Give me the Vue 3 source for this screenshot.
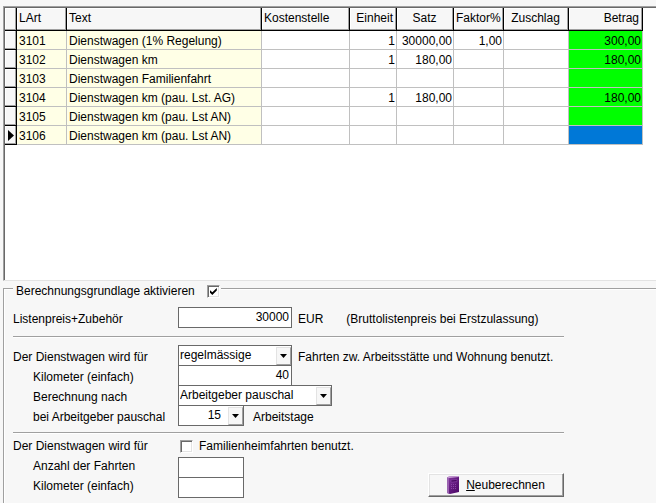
<script setup>
import { ref } from 'vue'

const columns = [
  { key: 'lart', label: 'LArt', align: 'left', tone: 'key' },
  { key: 'text', label: 'Text', align: 'left', tone: 'key' },
  { key: 'stelle', label: 'Kostenstelle', align: 'left' },
  { key: 'einheit', label: 'Einheit', align: 'right' },
  { key: 'satz', label: 'Satz', align: 'right', head: 'center' },
  { key: 'faktor', label: 'Faktor%', align: 'right' },
  { key: 'zuschlag', label: 'Zuschlag', align: 'right', head: 'center' },
  { key: 'betrag', label: 'Betrag', align: 'right', tone: 'sum' },
]

const rows = [
  { lart: '3101', text: 'Dienstwagen (1% Regelung)', einheit: '1', satz: '30000,00', faktor: '1,00', betrag: '300,00' },
  { lart: '3102', text: 'Dienstwagen km', einheit: '1', satz: '180,00', betrag: '180,00' },
  { lart: '3103', text: 'Dienstwagen Familienfahrt' },
  { lart: '3104', text: 'Dienstwagen km (pau. Lst. AG)', einheit: '1', satz: '180,00', betrag: '180,00' },
  { lart: '3105', text: 'Dienstwagen km (pau. Lst AN)' },
  { lart: '3106', text: 'Dienstwagen km (pau. Lst AN)' },
]

const current = ref(5)
const active = ref(true)
const family = ref(false)
const listPrice = ref('30000')
const usage = ref('regelmässige')
const distance = ref('40')
const method = ref('Arbeitgeber pauschal')
const days = ref('15')
const trips = ref('')
const familyDistance = ref('')
</script>

<template>
  <main class="page">
    <section class="grid-panel">
      <table class="grid">
        <colgroup>
          <col class="c-mark" />
          <col v-for="c in columns" :key="c.key" :class="'c-' + c.key" />
        </colgroup>
        <thead>
          <tr>
            <td class="mark"></td>
            <th v-for="c in columns" :key="c.key" scope="col" :class="c.head || c.align">{{ c.label }}</th>
          </tr>
        </thead>
        <tbody>
          <tr v-for="(r, i) in rows" :key="r.lart" @click="current = i">
            <td class="mark">
              <svg v-if="i === current" class="pointer" viewBox="0 0 6 11" width="6" height="11" aria-hidden="true">
                <path d="M0 0 L6 5.5 L0 11 Z" fill="#000" />
              </svg>
            </td>
            <td
              v-for="c in columns"
              :key="c.key"
              :class="[c.align, c.tone, { selected: c.tone === 'sum' && i === current }]"
            >{{ r[c.key] }}</td>
          </tr>
        </tbody>
      </table>
    </section>

    <fieldset class="group">
      <legend>
        <label for="active">Berechnungsgrundlage aktivieren</label>
        <input id="active" v-model="active" type="checkbox" class="check" />
      </legend>

      <div class="row">
        <label class="name" for="price">Listenpreis+Zubehör</label>
        <input id="price" v-model="listPrice" class="box wide" type="text" />
        <span class="unit">EUR</span>
        <span class="hint">(Bruttolistenpreis bei Erstzulassung)</span>
      </div>

      <hr class="rule first" />

      <div class="row">
        <label class="name" for="usage">Der Dienstwagen wird für</label>
        <span class="combo wide">
          <select id="usage" v-model="usage" class="box">
            <option>regelmässige</option>
            <option>gelegentliche</option>
          </select>
          <span class="drop"><svg viewBox="0 0 7 4" width="7" height="4"><path d="M0 0H7L3.5 4Z" /></svg></span>
        </span>
        <span class="unit">Fahrten zw. Arbeitsstätte und Wohnung benutzt.</span>
      </div>
      <div class="row">
        <label class="name sub" for="distance">Kilometer (einfach)</label>
        <input id="distance" v-model="distance" class="box wide" type="text" />
      </div>
      <div class="row">
        <label class="name sub" for="method">Berechnung nach</label>
        <span class="combo broad">
          <select id="method" v-model="method" class="box">
            <option>Arbeitgeber pauschal</option>
            <option>Arbeitnehmer pauschal</option>
          </select>
          <span class="drop"><svg viewBox="0 0 7 4" width="7" height="4"><path d="M0 0H7L3.5 4Z" /></svg></span>
        </span>
      </div>
      <div class="row">
        <label class="name sub" for="days">bei Arbeitgeber pauschal</label>
        <span class="combo short">
          <select id="days" v-model="days" class="box number">
            <option>15</option>
            <option>20</option>
          </select>
          <span class="drop"><svg viewBox="0 0 7 4" width="7" height="4"><path d="M0 0H7L3.5 4Z" /></svg></span>
        </span>
        <span class="unit days">Arbeitstage</span>
      </div>

      <hr class="rule second" />

      <div class="lower">
        <div class="row">
          <span class="name">Der Dienstwagen wird für</span>
          <input id="family" v-model="family" type="checkbox" class="check inset" />
          <label class="unit" for="family">Familienheimfahrten benutzt.</label>
        </div>
        <div class="bottom">
          <div>
            <div class="row">
              <label class="name sub" for="trips">Anzahl der Fahrten</label>
              <input id="trips" v-model="trips" class="box short" type="text" />
            </div>
            <div class="row">
              <label class="name sub" for="fdist">Kilometer (einfach)</label>
              <input id="fdist" v-model="familyDistance" class="box short" type="text" />
            </div>
          </div>
          <button type="button" class="calc">
            <svg viewBox="0 0 12 18" width="12" height="18" aria-hidden="true">
              <defs>
                <linearGradient id="cover" x1="0" y1="0" x2="1" y2="1">
                  <stop offset="0" stop-color="#8a3aa6" />
                  <stop offset="0.5" stop-color="#641a80" />
                  <stop offset="1" stop-color="#4c0866" />
                </linearGradient>
              </defs>
              <path d="M0 1.5 L2 0.5 L11 0 L12 1 V16 L3 18 L0 17 Z" fill="url(#cover)" />
              <path d="M0 1.5 L2 2 V17.6 L0 17 Z" fill="#9a62b0" />
              <path d="M0 1.5 L2 0.5 L11 0 L12 1 L2 2 Z" fill="#c9a3d6" />
              <path d="M4 4 L10 3.4 V5.6 L4 6.2 Z" fill="#4a0764" stroke="#8f4cab" stroke-width="0.6" />
              <path d="M4 8.5H10M4 10.5H10M4 12.5H10" stroke="#8a45a5" stroke-dasharray="1 1" />
            </svg>
            <span><u>N</u>euberechnen</span>
          </button>
        </div>
      </div>
    </fieldset>
  </main>
</template>

<style>
body {
  background: #f7f7f7;
  overflow-x: hidden;
}
</style>

<style scoped>
.page,
.page * {
  box-sizing: border-box;
}
.page {
  display: flex;
  flex-direction: column;
  min-height: 100vh;
  padding: 6px 0 0 3px;
  font-family: 'Liberation Sans', Arial, sans-serif;
  font-size: 12px;
  line-height: 14px;
  color: #000;
}
.page input,
.page select,
.page button {
  margin: 0;
  font: inherit;
  color: inherit;
  border-radius: 0;
}

/* data grid */
.grid-panel {
  flex: 1;
  background: #fff;
  border: solid #a0a0a0;
  border-width: 1px 0 0 1px;
  border-bottom: 1px solid #e3e3e3;
  box-shadow: inset 1px 1px #696969;
  padding: 1px 0 0 1px;
}
.grid {
  table-layout: fixed;
  width: 638px;
  border-collapse: separate;
  border-spacing: 0;
}
.c-mark { width: 12px; }
.c-lart { width: 50px; }
.c-text { width: 195px; }
.c-stelle { width: 88px; }
.c-einheit { width: 47px; }
.c-satz { width: 57px; }
.c-faktor { width: 50px; }
.c-zuschlag { width: 65px; }
.c-betrag { width: 74px; }
.grid th,
.grid td {
  height: 19px;
  padding: 2px 1px 0 2px;
  border: solid #c0c0c0;
  border-width: 0 1px 1px 0;
  font-weight: normal;
  white-space: nowrap;
  vertical-align: middle;
}
.grid th,
.grid .mark {
  background: #f7f7f7;
  border-color: #000;
  box-shadow: inset -1px -1px #a0a0a0, inset 1px 1px #fff;
}
.grid th,
.grid thead .mark {
  height: 23px;
}
.grid th {
  padding: 0 3px 3px 2px;
}
.grid .mark {
  padding: 0 0 0 3px;
}
.pointer {
  display: block;
}
.left { text-align: left; }
.right { text-align: right; }
.center { text-align: center; }
.key { background: #ffffe6; }
.sum { background: #0f0; }
.sum.selected { background: #0078d7; }

/* group box */
.group {
  margin: 0;
  min-width: 0;
  padding: 11px 92px 5px 9px;
  border: solid #a0a0a0;
  border-width: 1px 0 0 1px;
  box-shadow: inset 1px 1px #fff;
}
.group legend {
  display: flex;
  gap: 12px;
  height: 15px;
  margin: 0;
  padding: 4px 1px 0 3px;
  background: #f7f7f7;
}
.group legend label {
  height: 13px;
  line-height: 13px;
}
.check {
  appearance: none;
  flex: none;
  width: 13px;
  height: 13px;
  background: #fff;
  border: 1px solid;
  border-color: #a0a0a0 #fff #fff #a0a0a0;
  box-shadow: inset 1px 1px #696969, inset -1px -1px #e3e3e3;
}
.check:checked::before {
  content: '';
  display: block;
  width: 7px;
  height: 7px;
  margin: 2px;
  background: #000;
  clip-path: polygon(0 29%, 0 64%, 36% 100%, 100% 36%, 100% 0, 36% 62%);
}
.row {
  display: flex;
  height: 20px;
}
.name {
  flex: none;
  width: 165px;
  padding-top: 5px;
}
.sub {
  padding-left: 20px;
}
.unit {
  padding: 5px 0 0 6px;
  white-space: nowrap;
}
.hint {
  padding: 5px 0 0 23px;
  white-space: nowrap;
}
.days {
  padding-left: 9px;
}
.lower .name,
.lower .unit {
  padding-top: 2px;
}
.box {
  appearance: none;
  display: block;
  height: 21px;
  padding: 0 2px 2px;
  background: #fff;
  border: 1px solid #696969;
  text-align: right;
  outline-offset: -1px;
}
select.box {
  width: 100%;
  padding: 0 18px 2px 1px;
  text-align: left;
}
select.number {
  padding-right: 22px;
  text-align: right;
  text-align-last: right;
}
.wide { width: 114px; }
.broad { width: 154px; }
.short { width: 66px; }
.combo {
  position: relative;
  flex: none;
}
.drop {
  position: absolute;
  top: 2px;
  right: 1px;
  display: flex;
  align-items: center;
  justify-content: center;
  width: 15px;
  height: 18px;
  background: #f7f7f7;
  border: 1px solid;
  border-color: #e3e3e3 #a0a0a0 #a0a0a0 #e3e3e3;
  pointer-events: none;
}
.rule {
  height: 2px;
  border: 0;
  border-top: 1px solid #a0a0a0;
  background: #fff;
}
.first {
  margin: 9px 0 7px;
}
.second {
  margin: 7px 0 3px;
}
.page .inset {
  margin: 3px 0 0 2px;
}
.bottom {
  display: flex;
  justify-content: space-between;
  align-items: flex-end;
  padding-bottom: 1px;
}
.calc {
  display: flex;
  align-items: center;
  justify-content: center;
  gap: 7px;
  width: 136px;
  height: 24px;
  padding: 0;
  background: #f7f7f7;
  border: 1px solid;
  border-color: #fff #696969 #696969 #fff;
  box-shadow: inset -1px -1px #a0a0a0, inset 1px 1px #e3e3e3;
}
</style>
